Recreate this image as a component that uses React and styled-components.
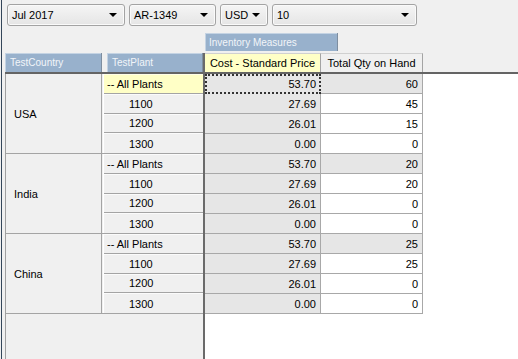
import React from "react";
import styled, { createGlobalStyle } from "styled-components";

const GlobalStyle = createGlobalStyle`
  html, body {
    margin: 0;
    padding: 0;
    background: #f0f0f0;
  }
  body {
    font-family: "Liberation Sans", Arial, sans-serif;
    font-size: 11px;
    color: #000;
  }
`;

const Page = styled.div`
  width: 517px;
  height: 359px;
  margin-left: 1px;
  border-left: 1px solid #34465a;
  box-sizing: border-box;
  display: flex;
  flex-direction: column;
  overflow: hidden;
  background: #f0f0f0;
`;

const Toolbar = styled.div`
  display: flex;
  gap: 4px;
  padding: 4px 0 0 5px;
  height: 22px;
`;

const Select = styled.div`
  width: ${(p) => p.w}px;
  height: 22px;
  box-sizing: border-box;
  border: 1px solid #a3a3a3;
  border-radius: 3px;
  background: linear-gradient(#f5f5f5, #e5e5e5);
  box-shadow: inset 0 0 0 1px #fafafa;
  display: flex;
  align-items: center;
  justify-content: space-between;
  padding: 0 7px 0 4px;
  font-size: 11px;
`;

const Arrow = styled.span`
  width: 0;
  height: 0;
  border-left: 4px solid transparent;
  border-right: 4px solid transparent;
  border-top: 4px solid #000;
`;

const Pivot = styled.div`
  flex: 1;
  display: flex;
  margin-top: 5px;
  min-height: 0;
`;

const RowAxis = styled.div`
  width: 198px;
  margin-left: 3px;
  display: flex;
  flex-direction: column;
`;

const AxisHeaderRow = styled.div`
  margin-top: 22px;
  height: 19px;
  display: flex;
  gap: 5px;
  border-bottom: 2px solid #646464;
`;

const HeaderBox = styled.div`
  width: ${(p) => p.w}px;
  box-sizing: border-box;
  background: #98b1cc;
  color: #f2f5f9;
  font-size: 10px;
  display: flex;
  align-items: center;
  padding-left: ${(p) => p.pad || 5}px;
  border-right: 1px solid #7e8ea0;
  box-shadow: inset 1px 1px 0 #c4d3e3;
`;

const AxisBody = styled.div`
  flex: 1;
  border-left: 1px solid #a0a0a0;
`;

const Group = styled.div`
  display: flex;
  height: 80px;
  border-bottom: 1px solid #a4a4a4;
  box-sizing: border-box;
`;

const CountryCell = styled.div`
  width: 96px;
  display: flex;
  align-items: center;
  padding-left: 8px;
  box-sizing: border-box;
  border-right: 1px solid #a4a4a4;
  margin-right: 1px;
`;

const PlantList = styled.div`
  flex: 1;
  display: flex;
  flex-direction: column;
  border-left: 1px solid #ffffff;
`;

const PlantCell = styled.div`
  height: 20px;
  box-sizing: border-box;
  display: flex;
  align-items: center;
  padding-left: ${(p) => (p.total ? 3 : 25)}px;
  background: ${(p) => (p.active ? "#ffffc6" : "transparent")};
  border-bottom: ${(p) => (p.last ? "none" : "1px solid #a4a4a4")};
  border-top: 1px solid ${(p) => (p.active ? "#ffffe8" : "#fbfbfb")};
`;

const DataArea = styled.div`
  flex: 1;
  display: flex;
  flex-direction: column;
`;

const MeasureBar = styled.div`
  height: 22px;
  padding: 2px 0 0 2px;
  box-sizing: border-box;
  display: flex;
`;

const MeasureTab = styled(HeaderBox)`
  height: 18px;
  padding-left: 4px;
`;

const Body = styled.div`
  flex: 1;
  border-left: 2px solid #6a6a6a;
  background: #fff;
  display: flex;
  flex-direction: column;
`;

const ColHeaderRow = styled.div`
  height: 19px;
  display: flex;
  background: #f0f0f0;
  border-bottom: 2px solid #646464;
`;

const ColHeader = styled.div`
  width: ${(p) => p.w}px;
  box-sizing: border-box;
  display: flex;
  align-items: center;
  justify-content: center;
  background: ${(p) => (p.active ? "#ffffc6" : "#f0f0f0")};
  border-right: 1px solid #a4a4a4;
  border-top: 1px solid #d0d0d0;
  font-size: 11px;
`;

const DataRow = styled.div`
  display: flex;
  height: 20px;
`;

const DataCell = styled.div`
  width: ${(p) => p.w}px;
  box-sizing: border-box;
  display: flex;
  align-items: center;
  justify-content: flex-end;
  padding-right: 4px;
  background: ${(p) => (p.shade ? "#e6e6e6" : "#ffffff")};
  border-right: 1px solid #a8a8a8;
  border-bottom: 1px solid #a8a8a8;
  ${(p) =>
    p.focus &&
    `
    border: 2px dotted #333;
    padding-right: 3px;
  `}
`;

const plants = ["-- All Plants", "1100", "1200", "1300"];

const countries = [
  {
    name: "USA",
    rows: [
      ["53.70", "60"],
      ["27.69", "45"],
      ["26.01", "15"],
      ["0.00", "0"],
    ],
  },
  {
    name: "India",
    rows: [
      ["53.70", "20"],
      ["27.69", "20"],
      ["26.01", "0"],
      ["0.00", "0"],
    ],
  },
  {
    name: "China",
    rows: [
      ["53.70", "25"],
      ["27.69", "25"],
      ["26.01", "0"],
      ["0.00", "0"],
    ],
  },
];

const filters = [
  { label: "Jul 2017", w: 118 },
  { label: "AR-1349", w: 87 },
  { label: "USD", w: 48 },
  { label: "10", w: 145 },
];

export default function App() {
  return (
    <>
      <GlobalStyle />
      <Page>
        <Toolbar>
          {filters.map((f) => (
            <Select key={f.label} w={f.w}>
              {f.label}
              <Arrow />
            </Select>
          ))}
        </Toolbar>
        <Pivot>
          <RowAxis>
            <AxisHeaderRow>
              <HeaderBox w={97}>TestCountry</HeaderBox>
              <HeaderBox w={96}>TestPlant</HeaderBox>
            </AxisHeaderRow>
            <AxisBody>
              {countries.map((c, ci) => (
                <Group key={c.name}>
                  <CountryCell>{c.name}</CountryCell>
                  <PlantList>
                    {plants.map((p, i) => (
                      <PlantCell
                        key={p}
                        total={i === 0}
                        active={ci === 0 && i === 0}
                        last={i === plants.length - 1}
                      >
                        {p}
                      </PlantCell>
                    ))}
                  </PlantList>
                </Group>
              ))}
            </AxisBody>
          </RowAxis>
          <DataArea>
            <MeasureBar>
              <MeasureTab w={133}>Inventory Measures</MeasureTab>
            </MeasureBar>
            <Body>
              <ColHeaderRow>
                <ColHeader w={116} active>
                  Cost - Standard Price
                </ColHeader>
                <ColHeader w={102}>Total Qty on Hand</ColHeader>
              </ColHeaderRow>
              {countries.map((c, ci) =>
                c.rows.map((r, i) => (
                  <DataRow key={c.name + i}>
                    <DataCell w={116} shade focus={ci === 0 && i === 0}>
                      {r[0]}
                    </DataCell>
                    <DataCell w={102} shade={i === 0}>
                      {r[1]}
                    </DataCell>
                  </DataRow>
                ))
              )}
            </Body>
          </DataArea>
        </Pivot>
      </Page>
    </>
  );
}
